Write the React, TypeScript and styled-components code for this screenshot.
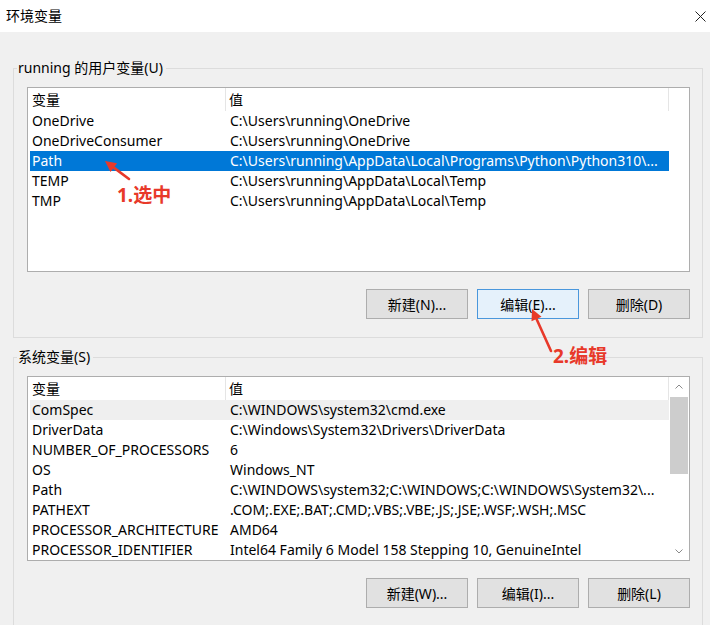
import React from 'react';
import styled, { createGlobalStyle } from 'styled-components';

const Global = createGlobalStyle`
  html, body { margin: 0; padding: 0; background: #f0f0f0; }
  body { font-family: "Noto Sans", "Noto Sans CJK SC", sans-serif; }
  * { box-sizing: border-box; }
`;

const Window = styled.div`
  position: relative;
  width: 710px;
  height: 625px;
  overflow: hidden;
  background: #f0f0f0;
  font-family: "Noto Sans", "Noto Sans CJK SC", sans-serif;
  font-size: 14px;
  color: #000;
`;

const TitleBar = styled.div`
  height: 32px;
  background: #fff;
  display: flex;
  align-items: center;
  justify-content: space-between;
  padding-left: 6px;
`;

const Title = styled.span`
  font-size: 14px;
  line-height: 20px;
`;

const CloseButton = styled.div`
  width: 20px;
  height: 32px;
  display: flex;
  align-items: center;
  justify-content: center;
`;

const Body = styled.div`
  padding: 26px 7px 0 13px;
`;

const Group = styled.fieldset`
  margin: 0;
  min-width: 0;
  border: 1px solid #dcdcdc;
  padding: 9px 12px 18px 13px;
  & + & {
    margin-top: 9px;
  }
`;

const Legend = styled.legend`
  margin-left: -10px;
  padding: 0 3px 0 1px;
  font-size: 14px;
  line-height: 20px;
`;

const List = styled.div`
  height: 185px;
  background: #fff;
  border: 1px solid #adadad;
  display: flex;
`;

const Table = styled.div`
  width: 642px;
  display: flex;
  flex-direction: column;
  overflow: hidden;
`;

const HeaderRow = styled.div`
  display: grid;
  grid-template-columns: 198px 1fr;
  height: 23px;
  flex: none;
`;

const HeaderCell = styled.div<{ $pad: number }>`
  padding-left: ${p => p.$pad}px;
  line-height: 23px;
  border-right: 1px solid #e5e5e5;
  white-space: nowrap;
`;

const Row = styled.div<{ $state?: 'selected' | 'hover' }>`
  display: grid;
  grid-template-columns: 196px 1fr;
  height: 20px;
  margin-left: 2px;
  flex: none;
  background: ${p => (p.$state === 'selected' ? '#0078d7' : p.$state === 'hover' ? '#efefef' : 'transparent')};
  color: ${p => (p.$state === 'selected' ? '#fff' : '#000')};
`;

const Cell = styled.div<{ $pad: number }>`
  padding-left: ${p => p.$pad}px;
  line-height: 20px;
  white-space: nowrap;
  overflow: hidden;
`;

const HeaderFiller = styled.div`
  width: 20px;
  height: 23px;
`;

const ScrollBar = styled.div`
  width: 20px;
  display: flex;
  flex-direction: column;
  background: #fff;
`;

const ScrollArrow = styled.div`
  height: 18px;
  display: flex;
  align-items: center;
  justify-content: center;
  flex: none;
`;

const Track = styled.div`
  flex: 1;
  padding: 2px 1px 0 1px;
`;

const Thumb = styled.div`
  height: 77px;
  background: #cdcdcd;
`;

const ButtonRow = styled.div`
  display: flex;
  justify-content: flex-end;
  gap: 9px;
  margin-top: 17px;
`;

const Button = styled.div<{ $hot?: boolean }>`
  width: 102px;
  height: 30px;
  display: flex;
  align-items: center;
  justify-content: center;
  background: ${p => (p.$hot ? '#e5f1fb' : '#e1e1e1')};
  border: 1px solid ${p => (p.$hot ? '#4a97dc' : '#adadad')};
  font-size: 14px;
  color: #000;
`;

const Overlay = styled.svg`
  position: absolute;
  left: 0;
  top: 0;
  width: 710px;
  height: 625px;
  pointer-events: none;
`;

const Note = styled.div<{ $x: number; $y: number }>`
  position: absolute;
  left: ${p => p.$x}px;
  top: ${p => p.$y}px;
  font-family: "Noto Sans", "Noto Sans CJK SC", sans-serif;
  font-weight: 700;
  font-size: 19px;
  line-height: 22px;
  color: #e8392a;
  white-space: nowrap;
`;

type Var = { name: string; value: string; state?: 'selected' | 'hover' };

const userVars: Var[] = [
  { name: 'OneDrive', value: 'C:\\Users\\running\\OneDrive' },
  { name: 'OneDriveConsumer', value: 'C:\\Users\\running\\OneDrive' },
  { name: 'Path', value: 'C:\\Users\\running\\AppData\\Local\\Programs\\Python\\Python310\\...', state: 'selected' },
  { name: 'TEMP', value: 'C:\\Users\\running\\AppData\\Local\\Temp' },
  { name: 'TMP', value: 'C:\\Users\\running\\AppData\\Local\\Temp' },
];

const sysVars: Var[] = [
  { name: 'ComSpec', value: 'C:\\WINDOWS\\system32\\cmd.exe', state: 'hover' },
  { name: 'DriverData', value: 'C:\\Windows\\System32\\Drivers\\DriverData' },
  { name: 'NUMBER_OF_PROCESSORS', value: '6' },
  { name: 'OS', value: 'Windows_NT' },
  { name: 'Path', value: 'C:\\WINDOWS\\system32;C:\\WINDOWS;C:\\WINDOWS\\System32\\...' },
  { name: 'PATHEXT', value: '.COM;.EXE;.BAT;.CMD;.VBS;.VBE;.JS;.JSE;.WSF;.WSH;.MSC' },
  { name: 'PROCESSOR_ARCHITECTURE', value: 'AMD64' },
  { name: 'PROCESSOR_IDENTIFIER', value: 'Intel64 Family 6 Model 158 Stepping 10, GenuineIntel' },
];

const VarTable: React.FC<{ rows: Var[] }> = ({ rows }) => (
  <Table>
    <HeaderRow>
      <HeaderCell $pad={4}>变量</HeaderCell>
      <HeaderCell $pad={3}>值</HeaderCell>
    </HeaderRow>
    {rows.map(r => (
      <Row key={r.name} $state={r.state}>
        <Cell $pad={2}>{r.name}</Cell>
        <Cell $pad={4}>{r.value}</Cell>
      </Row>
    ))}
  </Table>
);

const Chevron: React.FC<{ up?: boolean }> = ({ up }) => (
  <svg width="8" height="5" viewBox="0 0 8 5">
    <polyline
      points={up ? '0.5,4.5 4,1 7.5,4.5' : '0.5,0.5 4,4 7.5,0.5'}
      fill="none"
      stroke="#8a8a8a"
      strokeWidth="1"
    />
  </svg>
);

const Arrow: React.FC<{ tail: [number, number]; tip: [number, number] }> = ({ tail, tip }) => {
  const dx = tip[0] - tail[0];
  const dy = tip[1] - tail[1];
  const len = Math.hypot(dx, dy);
  const ux = dx / len;
  const uy = dy / len;
  const hl = 11;
  const hw = 5.5;
  const bx = tip[0] - hl * ux;
  const by = tip[1] - hl * uy;
  const nx = -uy;
  const ny = ux;
  const pts = `${tip[0]},${tip[1]} ${bx + hw * nx},${by + hw * ny} ${bx - hw * nx},${by - hw * ny}`;
  return (
    <g>
      <line x1={tail[0]} y1={tail[1]} x2={bx} y2={by} stroke="#e8392a" strokeWidth="2.6" strokeLinecap="round" />
      <polygon points={pts} fill="#e8392a" />
    </g>
  );
};

export default function App() {
  return (
    <Window>
      <Global />
      <TitleBar>
        <Title>环境变量</Title>
        <CloseButton>
          <svg width="11" height="11" viewBox="0 0 11 11">
            <path d="M0.5 0.5 L10.5 10.5 M10.5 0.5 L0.5 10.5" stroke="#222" strokeWidth="1" />
          </svg>
        </CloseButton>
      </TitleBar>
      <Body>
        <Group>
          <Legend>running 的用户变量(U)</Legend>
          <List>
            <VarTable rows={userVars} />
            <HeaderFiller />
          </List>
          <ButtonRow>
            <Button>新建(N)...</Button>
            <Button $hot>编辑(E)...</Button>
            <Button>删除(D)</Button>
          </ButtonRow>
        </Group>
        <Group>
          <Legend>系统变量(S)</Legend>
          <List>
            <VarTable rows={sysVars} />
            <ScrollBar>
              <ScrollArrow>
                <Chevron up />
              </ScrollArrow>
              <Track>
                <Thumb />
              </Track>
              <ScrollArrow>
                <Chevron />
              </ScrollArrow>
            </ScrollBar>
          </List>
          <ButtonRow>
            <Button>新建(W)...</Button>
            <Button>编辑(I)...</Button>
            <Button>删除(L)</Button>
          </ButtonRow>
        </Group>
      </Body>
      <Overlay viewBox="0 0 710 625">
        <Arrow tail={[129, 179]} tip={[105, 161]} />
        <Arrow tail={[551, 351]} tip={[532, 309]} />
      </Overlay>
      <Note $x={117} $y={184}>1.选中</Note>
      <Note $x={553} $y={345}>2.编辑</Note>
    </Window>
  );
}
